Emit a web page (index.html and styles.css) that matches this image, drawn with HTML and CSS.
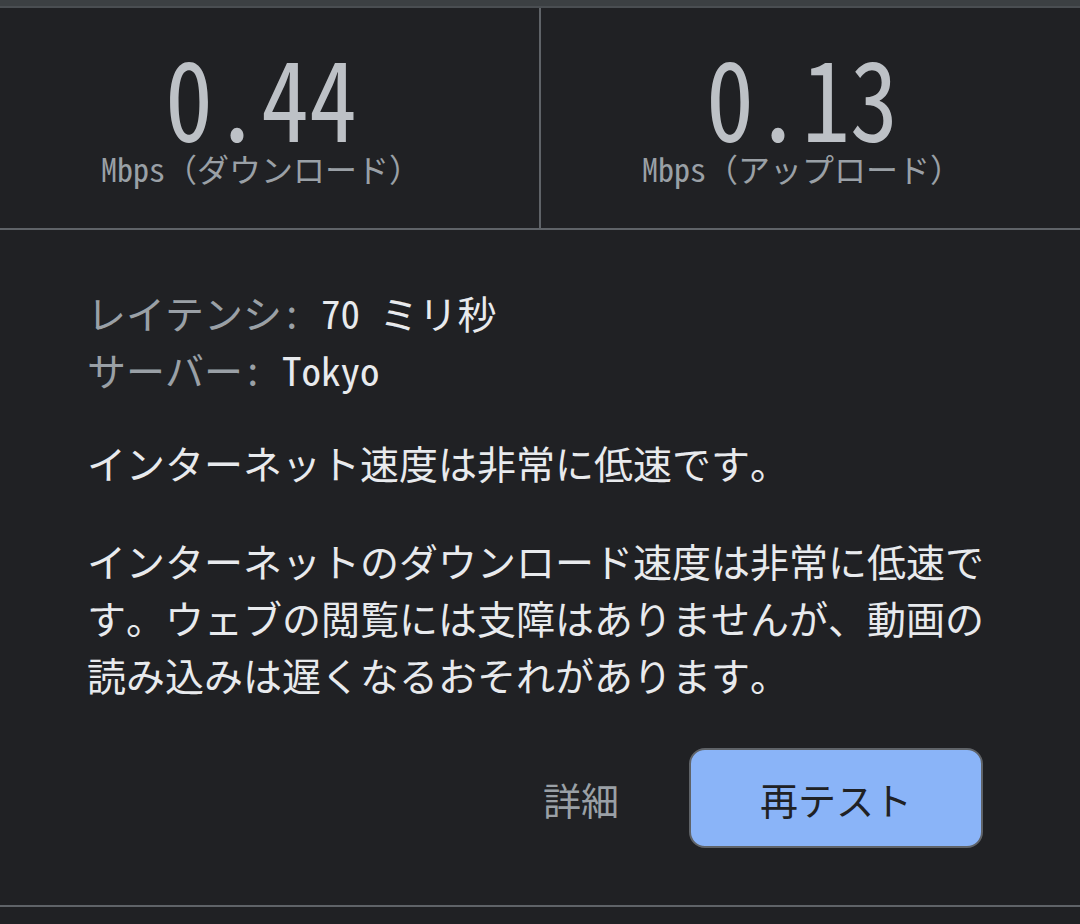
FILE: index.html
```html
<!DOCTYPE html>
<html lang="ja">
<head>
<meta charset="utf-8">
<link rel="stylesheet" href="styles.css">
</head>
<body>
<div class="panel">
  <div class="topbar"></div>
  <div class="metrics">
    <div class="metric">
      <div class="value">0.44</div>
      <div class="unit">Mbps（ダウンロード）</div>
    </div>
    <div class="metric">
      <div class="value">0.13</div>
      <div class="unit">Mbps（アップロード）</div>
    </div>
  </div>
  <div class="content">
    <div class="details">
      <div class="row"><span class="label">レイテンシ:</span> <span class="val">70 ミリ秒</span></div>
      <div class="row"><span class="label">サーバー:</span> <span class="val">Tokyo</span></div>
    </div>
    <p class="summary">インターネット速度は非常に低速です。</p>
    <p class="desc">インターネットのダウンロード速度は非常に低速です。ウェブの閲覧には支障はありませんが、動画の読み込みは遅くなるおそれがあります。</p>
  </div>
  <div class="actions">
    <button class="link-btn">詳細</button>
    <button class="primary-btn">再テスト</button>
  </div>
</div>
</body>
</html>
```

FILE: styles.css
```css
html, body {
  margin: 0;
  padding: 0;
  background: #202124;
}
body {
  width: 1080px;
  height: 924px;
  overflow: hidden;
  font-family: "Noto Sans Mono CJK JP", "Noto Sans CJK JP", sans-serif;
}
.panel {
  display: flex;
  flex-direction: column;
}
.topbar {
  height: 6px;
  background: #3c4043;
  border-bottom: 2px solid #4a4e52;
}
.metrics {
  display: flex;
  height: 220px;
  border-bottom: 2px solid #5f6368;
}
.metric {
  flex: 1;
  display: flex;
  flex-direction: column;
  align-items: center;
  padding-top: 51px;
  padding-right: 17px;
}
.metric + .metric {
  border-left: 2px solid #5f6368;
}
.value {
  font-size: 96px;
  line-height: 84px;
  color: #bdc1c6;
  transform: scaleY(1.15);
  transform-origin: 50% 84px;
}
.unit {
  font-size: 32px;
  line-height: 32px;
  color: #9aa0a6;
  margin-top: 9px;
}
.content {
  padding: 54px 80px 0 87px;
  font-size: 39px;
  line-height: 57px;
}
.label {
  color: #9aa0a6;
}
.val {
  color: #e8eaed;
}
.summary, .desc {
  color: #e8eaed;
  margin: 0;
}
.summary {
  margin-top: 36px;
}
.desc {
  margin-top: 41px;
}
.actions {
  display: flex;
  justify-content: flex-end;
  align-items: center;
  gap: 60px;
  margin-top: 45px;
  padding: 0 97px 57px 0;
  border-bottom: 2px solid #5f6368;
}
.link-btn {
  background: none;
  border: none;
  font: inherit;
  font-size: 38px;
  color: #9aa0a6;
  padding: 0 10px;
}
.primary-btn {
  width: 294px;
  height: 100px;
  background: #8ab4f8;
  border: 2px solid #5f6368;
  border-radius: 16px;
  font: inherit;
  font-size: 38px;
  color: #202124;
}
```
